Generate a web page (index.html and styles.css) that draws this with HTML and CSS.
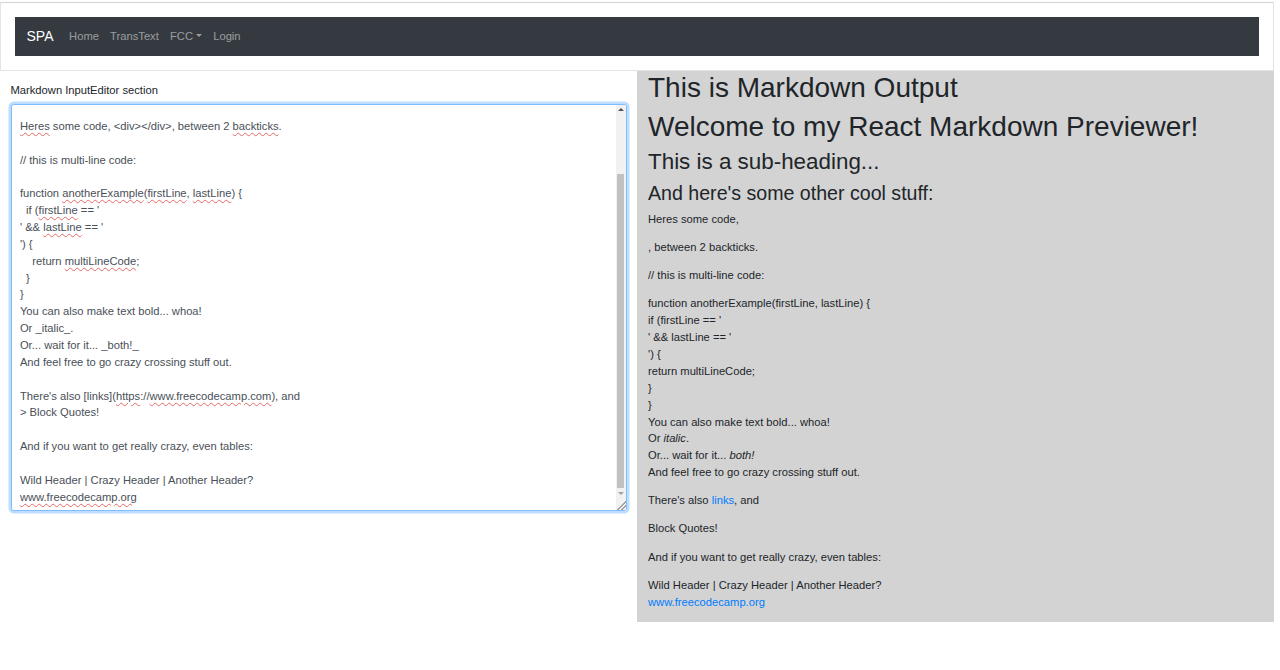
FILE: index.html
```html
<!DOCTYPE html>
<html lang="en">
<head>
<meta charset="utf-8">
<title>SPA</title>
<link rel="stylesheet" href="styles.css">
</head>
<body>
<div class="page">
  <header class="header">
    <nav class="navbar">
      <span class="brand">SPA</span>
      <a class="nav-link">Home</a>
      <a class="nav-link">TransText</a>
      <a class="nav-link">FCC<span class="caret"></span></a>
      <a class="nav-link">Login</a>
    </nav>
  </header>
  <main class="row">
    <section class="editor-col">
      <label class="editor-label">Markdown InputEditor section</label>
      <div class="textarea">
        <div class="textarea-text"><span class="sp">Heres</span> some code, &lt;div&gt;&lt;/div&gt;, between 2 <span class="sp">backticks</span>.

// this is multi-line code:

function <span class="sp">anotherExample</span>(<span class="sp">firstLine</span>, <span class="sp">lastLine</span>) {
  if (<span class="sp">firstLine</span> == '
' &amp;&amp; <span class="sp">lastLine</span> == '
') {
    return <span class="sp">multiLineCode</span>;
  }
}
You can also make text bold... whoa!
Or _italic_.
Or... wait for it... _both!_
And feel free to go crazy crossing stuff out.

There's also [links](<span class="sp">https</span>://<span class="sp">www.freecodecamp.com</span>), and
&gt; Block Quotes!

And if you want to get really crazy, even tables:

Wild Header | Crazy Header | Another Header?
<span class="sp">www.freecodecamp.org</span></div>
        <div class="scrollbar">
          <div class="sb-btn"><span class="sb-up"></span></div>
          <div class="sb-track"><div class="sb-thumb"></div></div>
          <div class="sb-btn"><span class="sb-down"></span></div>
          <div class="sb-corner"></div>
        </div>
      </div>
    </section>
    <section class="preview-col">
      <h1 class="h1">This is Markdown Output</h1>
      <h1 class="h1">Welcome to my React Markdown Previewer!</h1>
      <h2 class="h2">This is a sub-heading...</h2>
      <h3 class="h3">And here's some other cool stuff:</h3>
      <p class="p">Heres some code,</p>
      <p class="p">, between 2 backticks.</p>
      <p class="p">// this is multi-line code:</p>
      <p class="p">function anotherExample(firstLine, lastLine) {<br>if (firstLine == '<br>' &amp;&amp; lastLine == '<br>') {<br>return multiLineCode;<br>}<br>}<br>You can also make text bold... whoa!<br>Or <em>italic</em>.<br>Or... wait for it... <em>both!</em><br>And feel free to go crazy crossing stuff out.</p>
      <p class="p">There's also <a class="link">links</a>, and</p>
      <p class="p">Block Quotes!</p>
      <p class="p">And if you want to get really crazy, even tables:</p>
      <p class="p">Wild Header | Crazy Header | Another Header?<br><a class="link">www.freecodecamp.org</a></p>
    </section>
  </main>
</div>
</body>
</html>
```

FILE: styles.css
```css
html, body {
  margin: 0;
  padding: 0;
  background: #ffffff;
}

body {
  font-family: "Liberation Sans", Arial, sans-serif;
  color: #212529;
}

.page {
  width: 1274px;
}

.header {
  margin-top: 2px;
  border: 1px solid #e3e3e3;
  border-top-color: #d2d2d2;
  padding: 14px;
}

.navbar {
  background: #343a40;
  height: 39px;
  display: flex;
  align-items: center;
  padding: 0 11.5px;
  box-sizing: border-box;
}

.brand {
  color: #ffffff;
  font-size: 14px;
  line-height: 21px;
  margin-right: 10px;
}

.nav-link {
  color: rgba(255, 255, 255, 0.5);
  font-size: 11.2px;
  line-height: 16.8px;
  padding: 0 5.6px;
  display: inline-flex;
  align-items: center;
}

.caret {
  display: inline-block;
  margin-left: 3px;
  width: 0;
  height: 0;
  border-top: 3.4px solid rgba(255, 255, 255, 0.5);
  border-left: 3.4px solid transparent;
  border-right: 3.4px solid transparent;
  margin-top: -1px;
}

.row {
  display: flex;
  align-items: flex-start;
}

.editor-col {
  width: 637px;
  box-sizing: border-box;
  padding: 11px 10.5px 0 10.5px;
}

.editor-label {
  display: block;
  font-size: 11.2px;
  line-height: 16.8px;
  margin-bottom: 5px;
  color: #212529;
}

.textarea {
  display: flex;
  height: 407px;
  box-sizing: border-box;
  border: 1px solid #80bdff;
  border-radius: 2.8px;
  box-shadow: 0 0 0 2.5px rgba(0, 123, 255, 0.25);
  background: #ffffff;
  overflow: hidden;
}

.textarea-text {
  flex: 1;
  white-space: pre-wrap;
  font-size: 11.2px;
  line-height: 16.86px;
  color: #495057;
  padding: 13px 8.4px 0 8.4px;
}

.sp {
  text-decoration: underline wavy rgba(222, 60, 60, 0.75);
  text-decoration-thickness: 1px;
  text-underline-offset: 1.5px;
}

.scrollbar {
  width: 10px;
  display: flex;
  flex-direction: column;
  background: #f1f1f1;
}

.sb-btn {
  height: 10px;
  display: flex;
  align-items: center;
  justify-content: center;
}

.sb-up {
  width: 0;
  height: 0;
  border-bottom: 3px solid #505050;
  border-left: 3px solid transparent;
  border-right: 3px solid transparent;
}

.sb-down {
  width: 0;
  height: 0;
  border-top: 3px solid #a3a3a3;
  border-left: 3px solid transparent;
  border-right: 3px solid transparent;
}

.sb-track {
  flex: 1;
  display: flex;
  flex-direction: column;
  padding: 59px 1.5px 1px 1.5px;
}

.sb-thumb {
  flex: 1;
  background: #c1c1c1;
}

.sb-corner {
  height: 11px;
  background: linear-gradient(135deg, #f1f1f1 55%, #a0a0a0 56%, #a0a0a0 62%, #f1f1f1 63%, #f1f1f1 75%, #a0a0a0 76%, #a0a0a0 82%, #f1f1f1 83%);
}

.preview-col {
  width: 637px;
  box-sizing: border-box;
  background: #d3d3d3;
  padding: 0 10.5px 0.2px 11px;
}

.h1, .h2, .h3 {
  font-weight: 400;
  line-height: 1.2;
  margin: 0 0 5.6px 0;
  color: #212529;
}

.h1 {
  font-size: 28px;
}

.h2 {
  font-size: 22.4px;
}

.h3 {
  font-size: 19.6px;
}

.p {
  font-size: 11.2px;
  line-height: 16.9px;
  margin: 0 0 11.2px 0;
}

.link {
  color: #007bff;
  text-decoration: none;
}
```
